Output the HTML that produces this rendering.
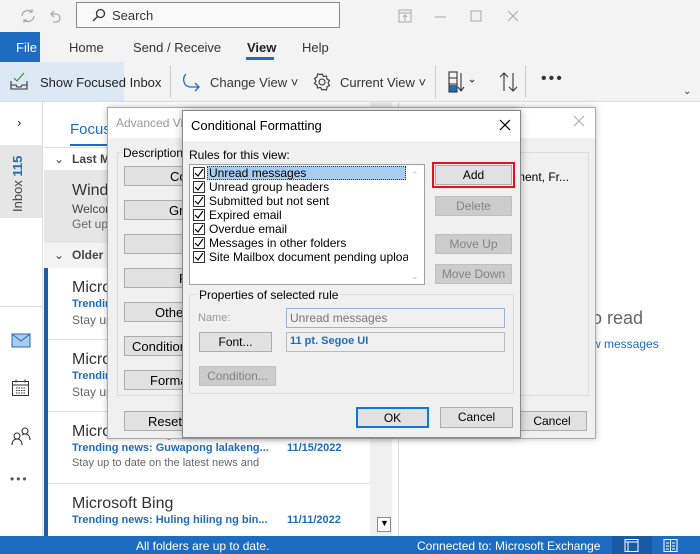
<!DOCTYPE html>
<html><head><meta charset="utf-8">
<style>
*{box-sizing:border-box;margin:0;padding:0}
body{width:700px;height:554px;overflow:hidden;position:relative;background:#fff;font-family:"Liberation Sans",sans-serif;color:#222}
.a{position:absolute}
.t{position:absolute;white-space:nowrap}
.btn{position:absolute;background:#e1e1e1;border:1px solid #adadad;font-size:12px;text-align:center;line-height:18px;color:#000;overflow:hidden;white-space:nowrap}
.dis{background:#cccccc;border-color:#bfbfbf;color:#838383}
.cb{position:absolute;width:12px;height:12px;border:1px solid #333;background:#fff}
.cb svg{position:absolute;left:0;top:0}
.it{position:absolute;font-size:12px;white-space:nowrap;color:#000}
.bt{position:absolute;font-size:13px;color:#000;white-space:nowrap}
</style></head><body>

<!-- title bar -->
<div class="a" style="left:0;top:0;width:700px;height:32px;background:#f3f3f3"></div>
<svg class="a" style="left:18px;top:6px" width="90" height="20" viewBox="0 0 90 20" fill="none" stroke="#aaa" stroke-width="1.3">
<path d="M4 10a6 6 0 0 1 10-4M16 10a6 6 0 0 1-10 4M14 3v3h-3M6 17v-3h3"/>
<path d="M36 5l-3 3 3 3M33 8h5a4 4 0 0 1 0 8h-3"/>
<path d="M62 9h6M62 12l3 3 3-3" stroke-width="1"/>
</svg>
<div class="a" style="left:76px;top:2px;width:264px;height:26px;background:#f9f9f9;border:1px solid #8a8a8a"></div>
<svg class="a" style="left:92px;top:8px" width="14" height="14" viewBox="0 0 14 14" fill="none" stroke="#333" stroke-width="1.3"><circle cx="8.5" cy="5.5" r="4"/><path d="M5.5 8.5L1 13"/></svg>
<div class="t" style="left:112px;top:8px;font-size:13px;color:#333">Search</div>
<svg class="a" style="left:398px;top:8px" width="300" height="18" viewBox="0 0 300 18" fill="none" stroke="#aaa" stroke-width="1">
<rect x="1" y="2" width="12" height="12"/><path d="M1 5h12M7 13V7M5 9l2-2 2 2"/>
<path d="M37 9h11"/><rect x="73" y="3" width="10" height="10"/><path d="M110 3l10 10M120 3l-10 10"/></svg>

<!-- tabs -->
<div class="a" style="left:0;top:32px;width:700px;height:30px;background:#f3f3f3"></div>
<div class="a" style="left:0;top:32px;width:40px;height:30px;background:#1e6cbf"></div>
<div class="t" style="left:16px;top:40px;font-size:13px;color:#fff">File</div>
<div class="t" style="left:69px;top:40px;font-size:13px;color:#333">Home</div>
<div class="t" style="left:133px;top:40px;font-size:13px;color:#333">Send / Receive</div>
<div class="t" style="left:247px;top:40px;font-size:13px;color:#222;font-weight:bold">View</div>
<div class="a" style="left:246px;top:57px;width:28px;height:3px;background:#1e6cbf"></div>
<div class="t" style="left:302px;top:40px;font-size:13px;color:#333">Help</div>

<!-- toolbar -->
<div class="a" style="left:0;top:62px;width:700px;height:40px;background:#f3f3f3;border-bottom:1px solid #ddd"></div>
<div class="a" style="left:0;top:62px;width:124px;height:39px;background:#dce8f4"></div>
<svg class="a" style="left:9px;top:72px" width="20" height="18" viewBox="0 0 20 18" fill="none" stroke="#333" stroke-width="1.1"><path d="M2 9v8h16V9M2 13h5l1 2h4l1-2h5"/><path d="M5 6l3 3 7-8" stroke="#2e8b3e"/></svg>
<div class="t" style="left:40px;top:75px;font-size:13px;color:#222">Show Focused Inbox</div>
<div class="a" style="left:170px;top:66px;width:1px;height:32px;background:#ccc"></div>
<svg class="a" style="left:180px;top:72px" width="22" height="20" viewBox="0 0 22 20" fill="none" stroke="#1e6cbf" stroke-width="1.3"><path d="M6 2C2 6 3 14 10 15h9M15 11l4 4-4 4"/></svg>
<div class="t" style="left:210px;top:75px;font-size:13px;color:#333">Change View ˅</div>
<svg class="a" style="left:312px;top:72px" width="20" height="20" viewBox="0 0 20 20" fill="none" stroke="#333" stroke-width="1.1"><circle cx="10" cy="10" r="3"/><path d="M10 2l1.5 2.5 3-0.5 .5 3 2.5 1.5-1.5 2.5 1.5 2.5-2.5 1.5-.5 3-3-.5L10 18l-1.5-2.5-3 .5-.5-3L2.5 11.5 4 9 2.5 6.5 5 5l.5-3 3 .5z"/></svg>
<div class="t" style="left:340px;top:75px;font-size:13px;color:#333">Current View ˅</div>
<div class="a" style="left:435px;top:66px;width:1px;height:32px;background:#ccc"></div>
<svg class="a" style="left:448px;top:71px" width="36" height="22" viewBox="0 0 36 22" fill="none" stroke="#333" stroke-width="1.1"><rect x="1" y="1" width="8" height="20"/><rect x="1.5" y="14" width="7" height="6.5" fill="#1e6cbf" stroke="none"/><path d="M1 7h8M1 13h8M13 2v18M10 16l3 4 3-4M22 9l2 2 2-2"/></svg>
<svg class="a" style="left:498px;top:71px" width="22" height="22" viewBox="0 0 22 22" fill="none" stroke="#333" stroke-width="1.1"><path d="M6 2v18M2 6l4-4 4 4M15 2v18M11 16l4 4 4-4"/></svg>
<div class="a" style="left:525px;top:66px;width:1px;height:32px;background:#ccc"></div>
<div class="t" style="left:541px;top:70px;font-size:16px;color:#333;letter-spacing:2px">•••</div>
<div class="t" style="left:683px;top:86px;font-size:10px;color:#333">⌄</div>

<!-- left nav -->
<div class="a" style="left:0;top:102px;width:43px;height:434px;background:#fff;border-right:1px solid #ddd"></div>
<div class="t" style="left:17px;top:115px;font-size:13px;color:#333">›</div>
<div class="a" style="left:0;top:145px;width:42px;height:73px;background:#e6e6e6"></div>
<div class="t" style="left:10px;top:212px;transform:rotate(-90deg);transform-origin:0 0;font-size:13px;color:#444">Inbox <b style="color:#1e6cbf">115</b></div>
<div class="a" style="left:0;top:306px;width:42px;height:1px;background:#ddd"></div>
<svg class="a" style="left:11px;top:333px" width="20" height="16" viewBox="0 0 20 16"><rect x="1" y="1" width="18" height="13" fill="#a8cbee" stroke="#1e6cbf"/><path d="M1 1l9 7 9-7" fill="none" stroke="#1e6cbf"/></svg>
<svg class="a" style="left:11px;top:378px" width="20" height="20" viewBox="0 0 20 20" fill="none" stroke="#333"><rect x="1.5" y="3.5" width="16" height="14"/><path d="M1.5 7h16M5 1.5v3M14 1.5v3"/><path d="M5 10h9M5 12.5h9M5 15h9" stroke-dasharray="1.5 1"/></svg>
<svg class="a" style="left:10px;top:426px" width="22" height="20" viewBox="0 0 22 20" fill="none" stroke="#333" stroke-width="1.1"><circle cx="7" cy="10" r="3"/><path d="M2 19c0-4 2-6 5-6s5 2 5 6"/><circle cx="15" cy="5" r="3"/><path d="M12 9c1-1 2-1 3-1 3 0 5 2 5 6"/></svg>
<div class="t" style="left:10px;top:472px;font-size:12px;color:#555;letter-spacing:2px">•••</div>

<!-- message list -->
<div class="t" style="left:70px;top:121px;font-size:15px;color:#1e6cbf">Focused</div>
<div class="a" style="left:70px;top:144px;width:60px;height:2px;background:#1e6cbf"></div>
<div class="a" style="left:44px;top:147px;width:326px;height:1px;background:#e0e0e0"></div>
<div class="a" style="left:44px;top:148px;width:326px;height:22px;background:#fff"></div>
<div class="t" style="left:54px;top:152px;font-size:12px;color:#444">⌄</div>
<div class="t" style="left:72px;top:152px;font-size:12px;color:#444;font-weight:bold">Last Month</div>
<div class="a" style="left:44px;top:170px;width:326px;height:73px;background:#e6e6e6"></div>
<div class="t" style="left:72px;top:182px;font-size:16px;color:#333">Windows</div>
<div class="t" style="left:72px;top:202px;font-size:12px;color:#444">Welcome</div>
<div class="t" style="left:72px;top:217px;font-size:12px;color:#666">Get up</div>
<div class="a" style="left:44px;top:243px;width:326px;height:25px;background:#f3f3f3"></div>
<div class="t" style="left:54px;top:248px;font-size:12px;color:#444">⌄</div>
<div class="t" style="left:72px;top:248px;font-size:12px;color:#444;font-weight:bold">Older</div>
<div class="a" style="left:44px;top:268px;width:4px;height:268px;background:#1e5ba8"></div>
<div class="a" style="left:48px;top:339px;width:322px;height:1px;background:#e0e0e0"></div>
<div class="a" style="left:48px;top:411px;width:322px;height:1px;background:#e0e0e0"></div>
<div class="a" style="left:48px;top:483px;width:322px;height:1px;background:#e0e0e0"></div>
<div class="t" style="left:72px;top:279px;font-size:16px;color:#333">Microsoft</div>
<div class="t" style="left:72px;top:298px;font-size:11px;color:#1e6cbf;font-weight:bold">Trending</div>
<div class="t" style="left:72px;top:313px;font-size:12px;color:#666">Stay up</div>
<div class="t" style="left:72px;top:351px;font-size:16px;color:#333">Microsoft</div>
<div class="t" style="left:72px;top:370px;font-size:11px;color:#1e6cbf;font-weight:bold">Trending</div>
<div class="t" style="left:72px;top:385px;font-size:12px;color:#666">Stay up</div>
<div class="t" style="left:72px;top:423px;font-size:16px;color:#333">Microsoft Bing</div>
<div class="t" style="left:72px;top:442px;font-size:11px;color:#1e6cbf;font-weight:bold">Trending news: Guwapong lalakeng...</div>
<div class="t" style="left:287px;top:442px;font-size:11px;color:#1e6cbf;font-weight:bold">11/15/2022</div>
<div class="t" style="left:72px;top:457px;font-size:11px;color:#666">Stay up to date on the latest news and</div>
<div class="t" style="left:72px;top:495px;font-size:16px;color:#333">Microsoft Bing</div>
<div class="t" style="left:72px;top:514px;font-size:11px;color:#1e6cbf;font-weight:bold">Trending news: Huling hiling ng bin...</div>
<div class="t" style="left:287px;top:514px;font-size:11px;color:#1e6cbf;font-weight:bold">11/11/2022</div>
<div class="a" style="left:370px;top:102px;width:22px;height:434px;background:#f0f0f0"></div>
<div class="a" style="left:377px;top:517px;width:14px;height:15px;background:#fff;border:1px solid #888"></div>
<div class="t" style="left:380px;top:518px;font-size:9px;color:#000">▼</div>
<div class="a" style="left:398px;top:102px;width:1px;height:434px;background:#ddd"></div>
<div class="t" style="left:592px;top:308px;font-size:18px;color:#666">o read</div>
<div class="t" style="left:592px;top:337px;font-size:12px;color:#1e6cbf">w messages</div>

<!-- status bar -->
<div class="a" style="left:0;top:536px;width:700px;height:18px;background:#1e6cbf"></div>
<div class="t" style="left:136px;top:539px;font-size:12px;color:#fff">All folders are up to date.</div>
<div class="t" style="left:417px;top:539px;font-size:12px;color:#fff">Connected to: Microsoft Exchange</div>
<div class="a" style="left:612px;top:536px;width:40px;height:18px;background:#185ba3"></div>
<svg class="a" style="left:624px;top:538px" width="60" height="15" viewBox="0 0 60 15" fill="none" stroke="#fff"><rect x="1" y="1.5" width="13" height="12"/><path d="M1 4h13M4 4v9.5"/><rect x="40" y="1.5" width="13" height="12"/><path d="M46.5 1.5v12M42 5h3M42 8h3M42 11h3M48 5h3M48 8h3M48 11h3"/></svg>

<!-- advanced view dialog -->
<div class="a" style="left:107px;top:107px;width:489px;height:332px;background:#f0f0f0;border:1px solid #aaa;box-shadow:0 0 6px rgba(0,0,0,.25)"></div>
<div class="a" style="left:108px;top:108px;width:487px;height:30px;background:#fff"></div>
<div class="t" style="left:116px;top:116px;font-size:12px;color:#999">Advanced View</div>
<svg class="a" style="left:573px;top:115px" width="12" height="12" viewBox="0 0 12 12" stroke="#aaa"><path d="M1 1l10 10M11 1L1 11"/></svg>
<div class="a" style="left:117px;top:152px;width:472px;height:244px;border:1px solid #dcdcdc"></div>
<div class="t" style="left:123px;top:146px;font-size:12px;color:#000;background:#f0f0f0;padding-right:3px">Description</div>
<div class="btn" style="left:124px;top:166px;width:140px;height:20px"></div>
<div class="btn" style="left:124px;top:200px;width:140px;height:20px"></div>
<div class="btn" style="left:124px;top:234px;width:140px;height:20px"></div>
<div class="btn" style="left:124px;top:268px;width:140px;height:20px"></div>
<div class="btn" style="left:124px;top:302px;width:140px;height:20px"></div>
<div class="btn" style="left:124px;top:336px;width:140px;height:20px"></div>
<div class="btn" style="left:124px;top:370px;width:140px;height:20px"></div>
<div class="btn" style="left:124px;top:411px;width:140px;height:20px"></div>
<div class="bt" style="left:170px;top:169px">Columns...</div>
<div class="bt" style="left:169px;top:203px">Group By...</div>
<div class="bt" style="left:179px;top:271px">Filter...</div>
<div class="bt" style="left:155px;top:305px">Other Settings...</div>
<div class="bt" style="left:132px;top:339px">Conditional Formatting...</div>
<div class="bt" style="left:150px;top:373px">Format Columns...</div>
<div class="bt" style="left:148px;top:414px">Reset Current View</div>
<div class="t" style="left:515px;top:170px;font-size:12px;color:#000">ment, Fr...</div>
<div class="btn" style="left:517px;top:411px;width:70px;height:20px">Cancel</div>

<!-- conditional formatting dialog -->
<div class="a" style="left:182px;top:110px;width:339px;height:328px;background:#f0f0f0;border:1px solid #888;box-shadow:0 0 8px rgba(0,0,0,.3)"></div>
<div class="a" style="left:183px;top:111px;width:337px;height:30px;background:#fff"></div>
<div class="t" style="left:191px;top:118px;font-size:13px;color:#000">Conditional Formatting</div>
<svg class="a" style="left:499px;top:119px" width="12" height="12" viewBox="0 0 12 12" stroke="#000" stroke-width="1.2"><path d="M1 1l10 10M11 1L1 11"/></svg>
<div class="t" style="left:189px;top:148px;font-size:12px;color:#000">Rules for this view:</div>
<div class="a" style="left:189px;top:164px;width:236px;height:121px;background:#fff;border:1px solid #a0a0a0"></div>
<div class="a" style="left:207px;top:166px;width:199px;height:14px;background:#a9cdf0;border:1px dotted #333"></div>
<div class="t" style="left:411px;top:170px;font-size:9px;color:#bbb">⌃</div>
<div class="t" style="left:411px;top:271px;font-size:9px;color:#bbb">⌄</div>
<div style="position:absolute;left:193px;top:166px;width:215px;height:100px;overflow:hidden">
<div class="cb" style="left:0;top:1px"><svg width="10" height="10" viewBox="0 0 10 10"><path d="M1 5l3 3 5-7" fill="none" stroke="#000" stroke-width="1.2"/></svg></div>
<div class="cb" style="left:0;top:15px"><svg width="10" height="10" viewBox="0 0 10 10"><path d="M1 5l3 3 5-7" fill="none" stroke="#000" stroke-width="1.2"/></svg></div>
<div class="cb" style="left:0;top:29px"><svg width="10" height="10" viewBox="0 0 10 10"><path d="M1 5l3 3 5-7" fill="none" stroke="#000" stroke-width="1.2"/></svg></div>
<div class="cb" style="left:0;top:43px"><svg width="10" height="10" viewBox="0 0 10 10"><path d="M1 5l3 3 5-7" fill="none" stroke="#000" stroke-width="1.2"/></svg></div>
<div class="cb" style="left:0;top:57px"><svg width="10" height="10" viewBox="0 0 10 10"><path d="M1 5l3 3 5-7" fill="none" stroke="#000" stroke-width="1.2"/></svg></div>
<div class="cb" style="left:0;top:71px"><svg width="10" height="10" viewBox="0 0 10 10"><path d="M1 5l3 3 5-7" fill="none" stroke="#000" stroke-width="1.2"/></svg></div>
<div class="cb" style="left:0;top:85px"><svg width="10" height="10" viewBox="0 0 10 10"><path d="M1 5l3 3 5-7" fill="none" stroke="#000" stroke-width="1.2"/></svg></div>
<div class="it" style="left:16px;top:0">Unread messages</div>
<div class="it" style="left:16px;top:14px">Unread group headers</div>
<div class="it" style="left:16px;top:28px">Submitted but not sent</div>
<div class="it" style="left:16px;top:42px">Expired email</div>
<div class="it" style="left:16px;top:56px">Overdue email</div>
<div class="it" style="left:16px;top:70px">Messages in other folders</div>
<div class="it" style="left:16px;top:84px">Site Mailbox document pending upload</div>
</div>
<div class="a" style="left:432px;top:162px;width:83px;height:26px;border:2px solid #e8101b"></div>
<div class="btn" style="left:435px;top:165px;width:77px;height:20px">Add</div>
<div class="btn dis" style="left:435px;top:196px;width:77px;height:20px">Delete</div>
<div class="btn dis" style="left:435px;top:234px;width:77px;height:20px">Move Up</div>
<div class="btn dis" style="left:435px;top:264px;width:77px;height:20px">Move Down</div>
<div class="a" style="left:189px;top:294px;width:325px;height:100px;border:1px solid #dcdcdc"></div>
<div class="t" style="left:196px;top:288px;font-size:12px;color:#000;background:#f0f0f0;padding:0 3px">Properties of selected rule</div>
<div class="t" style="left:198px;top:312px;font-size:11px;color:#999">Name:</div>
<div class="a" style="left:286px;top:308px;width:219px;height:20px;background:#f0f0f0;border:1px solid #9ab4d3"></div>
<div class="t" style="left:290px;top:311px;font-size:12px;color:#777">Unread messages</div>
<div class="btn" style="left:199px;top:332px;width:73px;height:20px">Font...</div>
<div class="a" style="left:286px;top:332px;width:219px;height:20px;background:#f0f0f0;border:1px solid #bbb"></div>
<div class="t" style="left:290px;top:335px;font-size:11px;color:#1e6cbf;font-weight:bold">11 pt. Segoe UI</div>
<div class="btn dis" style="left:199px;top:366px;width:77px;height:20px">Condition...</div>
<div class="btn" style="left:356px;top:407px;width:73px;height:21px;border:2px solid #0f78d7">OK</div>
<div class="btn" style="left:440px;top:407px;width:73px;height:21px">Cancel</div>

</body></html>
